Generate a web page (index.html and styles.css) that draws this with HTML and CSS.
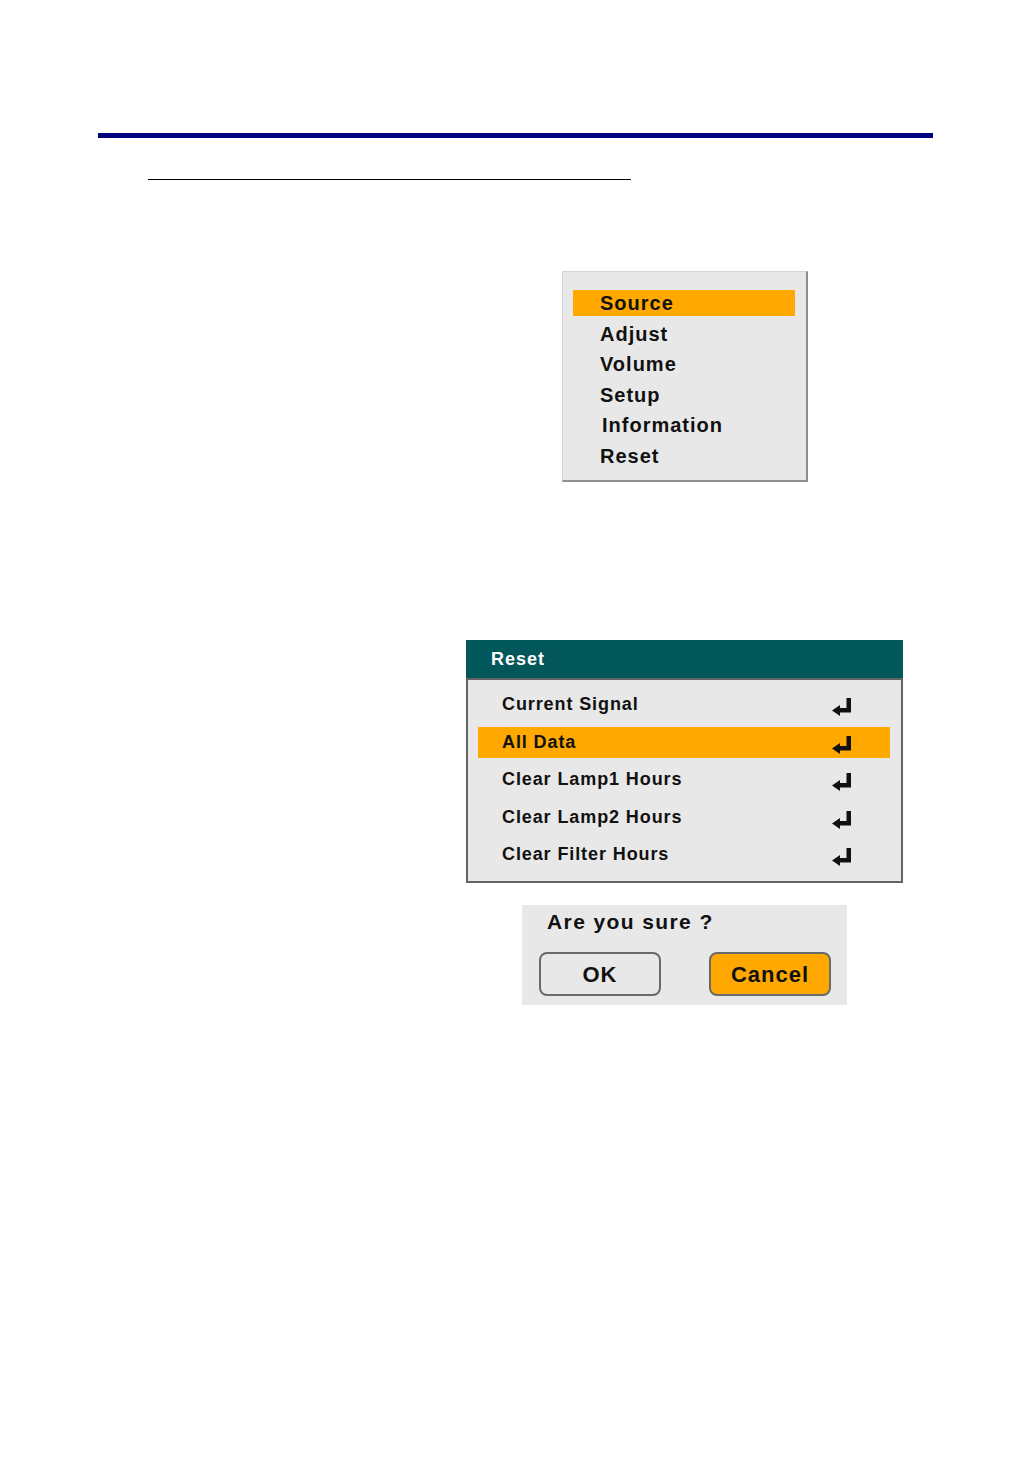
FILE: index.html
```html
<!DOCTYPE html>
<html lang="en">
<head>
    <meta charset="UTF-8">
    <title>Reset</title>
    <link rel="stylesheet" href="styles.css">
</head>
<body>
    <div class="rule"></div>
    <div class="title-line"></div>

    <!-- Main OSD menu -->
    <div class="main-menu">
        <div class="menu-item active">Source</div>
        <div class="menu-item">Adjust</div>
        <div class="menu-item">Volume</div>
        <div class="menu-item">Setup</div>
        <div class="menu-item info">Information</div>
        <div class="menu-item">Reset</div>
    </div>

    <!-- Reset sub menu -->
    <div class="reset-panel">
        <div class="reset-header">Reset</div>
        <div class="reset-body">
            <div class="reset-row"><span>Current Signal</span><svg class="enter" viewBox="0 0 22 18"><path d="M15.5 0h4.5v14.5H9v3.5L1 12.5 9 7v3h6.5z"/></svg></div>
            <div class="reset-row active"><span>All Data</span><svg class="enter" viewBox="0 0 22 18"><path d="M15.5 0h4.5v14.5H9v3.5L1 12.5 9 7v3h6.5z"/></svg></div>
            <div class="reset-row"><span>Clear Lamp1 Hours</span><svg class="enter" viewBox="0 0 22 18"><path d="M15.5 0h4.5v14.5H9v3.5L1 12.5 9 7v3h6.5z"/></svg></div>
            <div class="reset-row"><span>Clear Lamp2 Hours</span><svg class="enter" viewBox="0 0 22 18"><path d="M15.5 0h4.5v14.5H9v3.5L1 12.5 9 7v3h6.5z"/></svg></div>
            <div class="reset-row"><span>Clear Filter Hours</span><svg class="enter" viewBox="0 0 22 18"><path d="M15.5 0h4.5v14.5H9v3.5L1 12.5 9 7v3h6.5z"/></svg></div>
        </div>
    </div>

    <!-- Confirm dialog -->
    <div class="confirm">
        <div class="confirm-text">Are you sure ?</div>
        <div class="confirm-buttons">
            <div class="btn">OK</div>
            <div class="btn active">Cancel</div>
        </div>
    </div>
</body>
</html>
```

FILE: styles.css
```css
body {
    margin: 0;
    padding: 133px 0 0 0;
    background: #fff;
    font-family: 'Liberation Sans', Arial, sans-serif;
    font-weight: bold;
    color: #111;
}
.rule {
    height: 5px;
    width: 835px;
    margin-left: 98px;
    background: #00007f;
}
.title-line {
    width: 483px;
    margin: 41px 0 0 148px;
    border-top: 1px solid #000;
}

/* main menu */
.main-menu {
    box-sizing: border-box;
    width: 246px;
    height: 211px;
    margin: 91px 0 0 562px;
    padding: 18px 11px 0 10px;
    background: #e8e8e8;
    border-top: 1px solid #d4d4d4;
    border-left: 1px solid #d4d4d4;
    border-right: 2px solid #8e8e8e;
    border-bottom: 2px solid #8e8e8e;
    display: flex;
    flex-direction: column;
    gap: 4.6px;
}
.menu-item {
    height: 26px;
    line-height: 27px;
    padding-left: 27px;
    font-size: 20px;
    letter-spacing: 1px;
}
.menu-item.info {
    padding-left: 29px;
}
.menu-item.active {
    background: #ffa800;
}

/* reset panel */
.reset-panel {
    width: 437px;
    margin: 158px 0 0 466px;
}
.reset-header {
    height: 38px;
    line-height: 38px;
    padding-left: 25px;
    background: #02575a;
    color: #fff;
    font-size: 18px;
    letter-spacing: 1px;
}
.reset-body {
    box-sizing: border-box;
    height: 205px;
    padding: 9px 11px 0 10px;
    background: #e8e8e8;
    border: 2px solid #646464;
    display: flex;
    flex-direction: column;
    gap: 6.5px;
}
.reset-row {
    height: 31px;
    padding: 0 37px 0 24px;
    display: flex;
    align-items: center;
    justify-content: space-between;
    font-size: 18px;
    letter-spacing: 0.9px;
}
.reset-row.active {
    background: #ffa800;
}
.enter {
    width: 22px;
    height: 18px;
    margin-top: 5px;
    fill: #111;
}

/* confirm dialog */
.confirm {
    box-sizing: border-box;
    width: 325px;
    height: 100px;
    margin: 22px 0 0 522px;
    padding: 4px 0 0 17px;
    background: #e8e8e8;
}
.confirm-text {
    padding-left: 8px;
    height: 34px;
    line-height: 26px;
    font-size: 21px;
    letter-spacing: 1.4px;
}
.confirm-buttons {
    display: flex;
    gap: 48px;
    margin-top: 9px;
}
.btn {
    box-sizing: border-box;
    width: 122px;
    height: 44px;
    line-height: 41px;
    text-align: center;
    font-size: 22px;
    letter-spacing: 1px;
    border: 2px solid #6a6a6a;
    border-radius: 8px;
    background: #e8e8e8;
}
.btn.active {
    background: #ffa800;
}
```
